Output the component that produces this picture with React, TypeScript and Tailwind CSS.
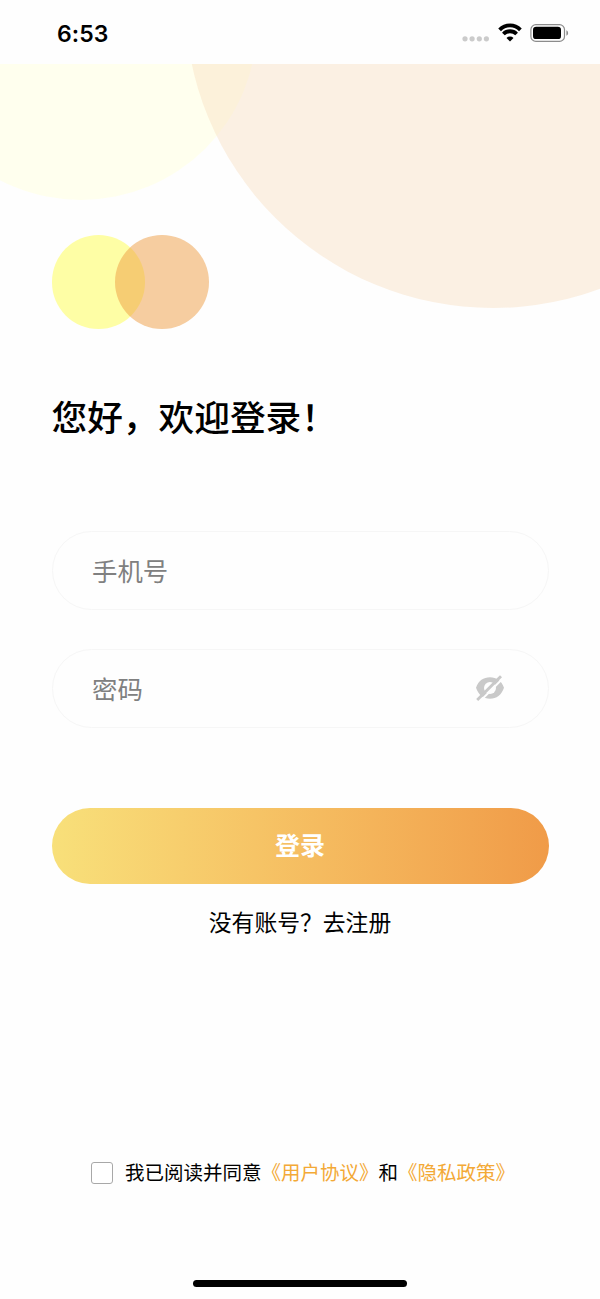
import { useState } from "react";

function StatusBar() {
  return (
    <header className="relative z-10 flex h-16 items-start justify-between bg-[#fefefe] pl-[57px] pr-[31px] pt-[22px]">
      <span className="mt-px font-['Inter',sans-serif] text-[23px] font-semibold leading-[23px] tracking-[0.1px] text-black">6:53</span>
      <div className="flex items-start">
        <svg width="28" height="23" viewBox="0 0 28 23" className="mr-2" fill="#cbcbcb">
          <circle cx="3" cy="16.8" r="2.6" />
          <circle cx="10.1" cy="16.8" r="2.6" />
          <circle cx="17.3" cy="16.8" r="2.6" />
          <circle cx="24.4" cy="16.8" r="2.6" />
        </svg>
        <svg width="24" height="20" viewBox="0 0 24 20" className="mr-2" fill="none" stroke="#000" strokeWidth="3.8">
          <path d="M1.6 7.8a14.6 14.6 0 0 1 20.8 0" />
          <path d="M5.4 12a9.3 9.3 0 0 1 13.2 0" />
          <path d="M12 19.400l-3.500-3.500a4.900 4.900 0 0 1 7 0z" fill="#000" stroke="none" />
        </svg>
        <svg width="39" height="22" viewBox="0 0 39 22">
          <rect x="0.9" y="2.6" width="33.6" height="16.8" rx="5" fill="none" stroke="#8c8c8c" strokeWidth="1.2" />
          <rect x="3" y="4.7" width="28" height="12.4" rx="3.2" fill="#000" />
          <path d="M36.4 8.2v5.6c1-.5 1.7-1.5 1.7-2.8s-.7-2.3-1.7-2.8z" fill="#8c8c8c" />
        </svg>
      </div>
    </header>
  );
}

function EyeOffIcon() {
  return (
    <svg width="30" height="28" viewBox="0 0 30 28">
      <path d="M1 13.800C3.500 6.500 8.500 3.200 15 3.200S26.500 6.500 29 13.800c-2.500 7.300-7.500 11-14 11s-11.500-3.700-14-11z" fill="#c9c9c9" />
      <circle cx="15" cy="14" r="6" fill="#fefefe" />
      <path d="M4.300 28L28.300 4" stroke="#fefefe" strokeWidth="2" />
      <path d="M2.200 26L26 2.200" stroke="#c9c9c9" strokeWidth="2.900" />
    </svg>
  );
}

export default function App() {
  const [visible, setVisible] = useState(false);
  const [agreed, setAgreed] = useState(false);

  return (
    <div className="relative flex h-[1299px] w-[600px] flex-col overflow-hidden bg-[#fefefe] font-['Noto_Sans_CJK_SC',sans-serif] text-black">
      {/* decorative circles, clipped by the status bar */}
      <div className="absolute -left-[95px] -top-[152px] size-[352px] rounded-full bg-[#ffffee]" />
      <div className="absolute left-[185px] -top-[308px] size-[616px] rounded-full bg-[#f8dcbc]/40" />

      <StatusBar />

      <main className="relative flex flex-1 flex-col px-[51.5px]">
        <div className="mt-[171px] flex">
          <div className="size-[93.5px] rounded-full bg-[#fefea5]" />
          <div className="-ml-[30px] size-[93.5px] rounded-full bg-[#ed9c42]/50" />
        </div>

        <h1 className="mt-[61.5px] text-[35.7px] font-medium leading-[52px]">您好，欢迎登录！</h1>

        <label className="mt-[89px] flex h-[79px] items-center rounded-full border border-[#f6f6f6] px-[39.5px]">
          <input type="tel" placeholder="手机号" className="mb-[2px] w-full bg-transparent text-[25.4px] leading-9 outline-none placeholder:text-[#808080]" />
        </label>
        <label className="mt-[39px] flex h-[79px] items-center rounded-full border border-[#f6f6f6] pl-[39.5px] pr-[42.5px]">
          <input
            type={visible ? "text" : "password"}
            placeholder="密码"
            className="mb-[2px] min-w-0 flex-1 bg-transparent text-[25.4px] leading-9 outline-none placeholder:text-[#808080]"
          />
          <button type="button" className="mb-px" onClick={() => setVisible(!visible)}>
            <EyeOffIcon />
          </button>
        </label>

        <button className="mt-20 h-[76px] rounded-full bg-linear-to-r from-[#f8e07a] to-[#f09b48] pb-[2px] text-[25px] font-bold text-white">
          登录
        </button>
        <p className="mt-[19.5px] text-center text-[22.8px] leading-9">没有账号？去注册</p>

        <div className="mt-[216.5px] flex items-center pl-[39.5px]">
          <button
            type="button"
            role="checkbox"
            aria-checked={agreed}
            onClick={() => setAgreed(!agreed)}
            className="size-[22px] rounded-[3px] border border-[#a8a8a8] bg-white aria-checked:bg-[#f0a63c]"
          />
          <p className="mb-[2px] ml-3 whitespace-nowrap text-[19.5px] leading-8">
            我已阅读并同意<span className="text-[#f3a936]">《用户协议》</span>和<span className="text-[#f3a936]">《隐私政策》</span>
          </p>
        </div>
      </main>

      <div className="mb-3 h-[7px] w-[214px] self-center rounded-full bg-black" />
    </div>
  );
}
